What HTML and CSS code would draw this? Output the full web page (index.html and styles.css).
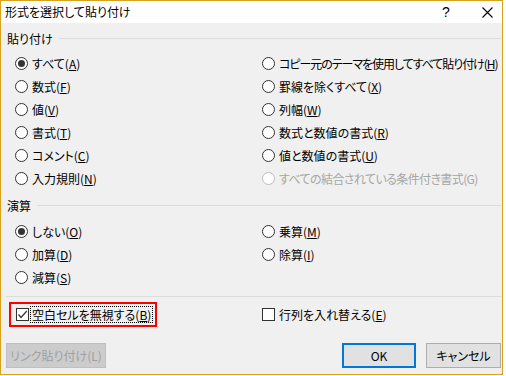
FILE: index.html
```html
<!DOCTYPE html>
<html>
<head>
  <meta charset="utf-8">
  <link rel="stylesheet" href="styles.css">
</head>
<body>
  <div class="dialog">
    <div class="titlebar">
      <span class="title">形式を選択して貼り付け</span>
      <span class="help">?</span>
      <span class="close">
        <svg width="11" height="11" viewBox="0 0 11 11"><path d="M0.5 0.5 L10.5 10.5 M10.5 0.5 L0.5 10.5" stroke="#000" stroke-width="1.1" fill="none"/></svg>
      </span>
    </div>

    <div class="body">
      <!-- 貼り付け -->
      <div class="group-head"><span>貼り付け</span><i class="rule"></i></div>
      <div class="options">
        <div class="opt"><span class="radio checked"></span>すべて(<u>A</u>)</div>
        <div class="opt tighter"><span class="radio"></span>コピー元のテーマを使用してすべて貼り付け(<u>H</u>)</div>
        <div class="opt"><span class="radio"></span>数式(<u>F</u>)</div>
        <div class="opt"><span class="radio"></span>罫線を除くすべて(<u>X</u>)</div>
        <div class="opt"><span class="radio"></span>値(<u>V</u>)</div>
        <div class="opt"><span class="radio"></span>列幅(<u>W</u>)</div>
        <div class="opt"><span class="radio"></span>書式(<u>T</u>)</div>
        <div class="opt"><span class="radio"></span>数式と数値の書式(<u>R</u>)</div>
        <div class="opt"><span class="radio"></span>コメント(<u>C</u>)</div>
        <div class="opt"><span class="radio"></span>値と数値の書式(<u>U</u>)</div>
        <div class="opt"><span class="radio"></span>入力規則(<u>N</u>)</div>
        <div class="opt disabled tight"><span class="radio"></span>すべての結合されている条件付き書式(G)</div>
      </div>

      <!-- 演算 -->
      <div class="group-head"><span>演算</span><i class="rule"></i></div>
      <div class="options">
        <div class="opt"><span class="radio checked"></span>しない(<u>O</u>)</div>
        <div class="opt"><span class="radio"></span>乗算(<u>M</u>)</div>
        <div class="opt"><span class="radio"></span>加算(<u>D</u>)</div>
        <div class="opt"><span class="radio"></span>除算(<u>I</u>)</div>
        <div class="opt"><span class="radio"></span>減算(<u>S</u>)</div>
      </div>

      <div class="separator"></div>

      <div class="check-row">
        <div class="highlight">
          <span class="checkbox checked">
            <svg width="11" height="11" viewBox="0 0 11 11"><path d="M1.5 5.5 L4 8.5 L9.8 2" stroke="#333" stroke-width="1.2" fill="none"/></svg>
          </span>
          <span class="focus">空白セルを無視する(<u>B</u>)</span>
        </div>
        <div class="opt"><span class="checkbox"></span>行列を入れ替える(<u>E</u>)</div>
      </div>

      <div class="button-row">
        <button class="btn btn-disabled">リンク貼り付け(L)</button>
        <button class="btn btn-default">OK</button>
        <button class="btn btn-cancel">キャンセル</button>
      </div>
    </div>
  </div>
</body>
</html>
```

FILE: styles.css
```css
body {
  margin: 0;
  background: #fff;
  font-family: "Noto Sans CJK JP", "Noto Sans", sans-serif;
  font-size: 12px;
  font-feature-settings: "palt";
  color: #000;
}

.dialog {
  box-sizing: border-box;
  width: 503px;
  height: 375px;
  border: 1px solid #d9a21b;
  background: #f0f0f0;
  display: flex;
  flex-direction: column;
}

.titlebar {
  height: 22px;
  background: #fff;
  display: flex;
  align-items: center;
  padding-left: 4px;
}

.title {
  line-height: 22px;
}

.help {
  margin-left: auto;
  width: 20px;
  text-align: center;
  font-family: "Liberation Sans", sans-serif;
  font-size: 14px;
}

.close {
  width: 29px;
  margin-left: 17px;
  display: flex;
  justify-content: center;
}

.body {
  padding: 7px 1px 0 5px;
}

.group-head {
  display: flex;
  align-items: center;
  height: 16px;
  padding-left: 1px;
}

.group-head + .options {
  margin-top: 6px;
}

.options + .group-head {
  margin-top: 7px;
}

.options + .group-head + .options {
  margin-top: 7px;
}

.rule {
  flex: 1;
  height: 1px;
  background: #dcdcdc;
  margin-left: 6px;
}

.options {
  display: grid;
  grid-template-columns: 247px 1fr;
  grid-auto-rows: 23px;
  padding-left: 9px;
}

.opt {
  display: flex;
  align-items: center;
  white-space: nowrap;
}

.opt.tight {
  letter-spacing: -0.6px;
}

.opt.tighter {
  letter-spacing: -1.05px;
}

.opt u {
  text-underline-offset: 1px;
}

.radio {
  box-sizing: border-box;
  width: 13px;
  height: 13px;
  border: 1px solid #333;
  border-radius: 50%;
  background: #fff;
  margin-right: 4px;
  display: flex;
  align-items: center;
  justify-content: center;
  flex: none;
}

.radio.checked::after {
  content: "";
  width: 7px;
  height: 7px;
  border-radius: 50%;
  background: #333;
}

.opt.disabled {
  color: #a6a6a6;
}

.opt.disabled .radio {
  border-color: #bcbcbc;
}

.separator {
  height: 1px;
  background: #dcdcdc;
  margin: 7px 0 0 0;
}

.check-row {
  display: grid;
  grid-template-columns: 253px 1fr;
  height: 25px;
  margin-top: 5px;
  padding-left: 3px;
}

.highlight {
  box-sizing: border-box;
  height: 25px;
  width: 148px;
  border: 2px solid #ff0000;
  display: flex;
  align-items: center;
  padding-left: 5px;
}

.checkbox {
  box-sizing: border-box;
  width: 13px;
  height: 13px;
  border: 1px solid #333;
  background: #fff;
  margin-right: 4px;
  display: flex;
  align-items: center;
  justify-content: center;
  flex: none;
}

.highlight .checkbox {
  margin-right: 1px;
}

.focus {
  border: 1px dotted #000;
  padding: 0 1px;
  line-height: 15px;
  white-space: nowrap;
}

.button-row {
  display: flex;
  gap: 10px;
  margin-top: 16px;
}

.btn {
  box-sizing: border-box;
  height: 25px;
  font-family: inherit;
  font-size: 12px;
  font-feature-settings: "palt";
  background: #e1e1e1;
  border: 1px solid #adadad;
  color: #000;
  padding: 0;
}

.btn-disabled {
  width: 100px;
  background: #cccccc;
  border-color: #bfbfbf;
  color: #a0a0a0;
  margin-right: auto;
}

.btn-default {
  width: 74px;
  border: 2px solid #0078d7;
}

.btn-cancel {
  width: 75px;
}
```
